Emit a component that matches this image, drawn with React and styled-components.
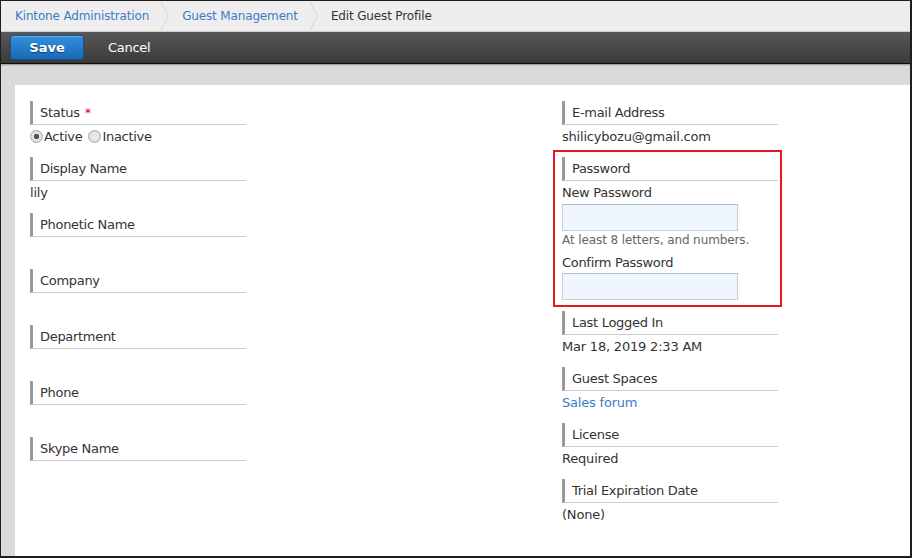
import React from 'react'
import styled, { createGlobalStyle } from 'styled-components'

const GlobalStyle = createGlobalStyle`
  body {
    margin: 0;
    font-family: "DejaVu Sans", Verdana, sans-serif;
    font-size: 13px;
    color: #333;
  }
`

const Frame = styled.div`
  width: 912px;
  height: 558px;
  box-sizing: border-box;
  border: 1px solid #1e1e1e;
  border-right-width: 2px;
  border-bottom-width: 2px;
  display: flex;
  flex-direction: column;
  overflow: hidden;
`

const Breadcrumb = styled.nav`
  height: 30px;
  background: #eeeeee;
  border-bottom: 1px solid #cfcfcf;
  display: flex;
  align-items: stretch;
  padding-left: 14px;
`

const Crumb = styled.span`
  display: flex;
  align-items: center;
  font-size: 12px;
  letter-spacing: -0.15px;
  color: ${p => (p.$current ? '#333' : '#3d7cc9')};
`

const Chevron = styled.svg`
  width: 10px;
  height: 30px;
  margin: 0 12px 0 11px;
  flex: none;
`

const Toolbar = styled.div`
  height: 31px;
  background: linear-gradient(#585858, #3a3a3a);
  border-bottom: 1px solid #0c0c0c;
  display: flex;
  align-items: center;
  padding-left: 9px;
  gap: 24px;
`

const SaveButton = styled.button`
  width: 74px;
  height: 25px;
  border: 1px solid #1b4d86;
  border-radius: 3px;
  background: linear-gradient(#3290dc, #1a69b8);
  color: #fff;
  font-family: inherit;
  font-size: 13px;
  font-weight: bold;
  text-shadow: 0 1px 1px #123d6a;
  box-shadow: inset 0 1px 0 rgba(255, 255, 255, 0.25);
  cursor: pointer;
`

const CancelButton = styled.button`
  border: none;
  background: none;
  color: #fff;
  font-family: inherit;
  font-size: 13px;
  padding: 0;
  letter-spacing: -0.3px;
  cursor: pointer;
`

const Backdrop = styled.div`
  flex: 1;
  display: flex;
  background: #d8dadc;
  box-shadow: inset 0 1px 0 #a3a3a3, inset 0 2px 0 #c4c6c8;
  padding: 21px 0 0 14px;
`

const Panel = styled.div`
  flex: 1;
  background: #fff;
  padding: 16px 0 0 15px;
  display: grid;
  grid-template-columns: 532px 216px;
  align-items: start;
`

const Column = styled.div`
  display: flex;
  flex-direction: column;
`

const Field = styled.div`
  margin-bottom: 9px;
`

const Label = styled.div`
  height: 24px;
  line-height: 23px;
  border-left: 3px solid #999;
  border-bottom: 1px solid #cccccc;
  padding-left: 7px;
  letter-spacing: -0.3px;
  width: 216px;
  box-sizing: border-box;
`

const Required = styled.span`
  color: #e0001b;
  margin-left: 5px;
`

const Value = styled.div`
  height: 23px;
  line-height: 23px;
  letter-spacing: -0.2px;
  color: ${p => (p.$link ? '#3d7cc9' : '#333')};
  display: flex;
  align-items: center;
`

const RadioOption = styled.label`
  display: flex;
  align-items: center;
  margin-right: 6px;
  letter-spacing: -0.3px;
`

const RadioDot = styled.span`
  width: 11px;
  height: 11px;
  border-radius: 50%;
  border: 1px solid #a9a9a9;
  background: radial-gradient(circle, ${p => (p.$checked ? '#555 0 2.5px, ' : '')}#e8e8e8 3px, #d0d0d0);
  margin-right: 1px;
`

const PasswordBox = styled.div`
  border: 2px solid #e8141e;
  margin: -7px -4px 4px -9px;
  padding: 5px 2px 5px 7px;
`

const SubLabel = styled.div`
  height: ${p => p.$h || 22}px;
  line-height: 23px;
  letter-spacing: -0.3px;
  margin-top: ${p => p.$gap || 0}px;
`

const TextInput = styled.input`
  display: block;
  width: 176px;
  height: 27px;
  box-sizing: border-box;
  border: 1px solid #c3ced6;
  border-top-color: #aebbc5;
  background: #eff6fd;
  margin: 0;
`

const Hint = styled.div`
  height: 18px;
  line-height: 19px;
  font-size: 12px;
  color: #666;
  letter-spacing: -0.1px;
`

const leftFields = [
  { label: 'Display Name', value: 'lily' },
  { label: 'Phonetic Name' },
  { label: 'Company' },
  { label: 'Department' },
  { label: 'Phone' },
  { label: 'Skype Name' },
]

const rightFields = [
  { label: 'Last Logged In', value: 'Mar 18, 2019 2:33 AM' },
  { label: 'Guest Spaces', value: 'Sales forum', link: true },
  { label: 'License', value: 'Required' },
  { label: 'Trial Expiration Date', value: '(None)' },
]

const Sep = () => (
  <Chevron viewBox="0 0 10 30">
    <polyline points="0.5,0 8.5,15 0.5,30" fill="none" stroke="#d6d6d6" strokeWidth="1" />
  </Chevron>
)

const App = () => {
  return (
    <Frame>
      <GlobalStyle />
      <Breadcrumb>
        <Crumb>Kintone Administration</Crumb>
        <Sep />
        <Crumb>Guest Management</Crumb>
        <Sep />
        <Crumb $current>Edit Guest Profile</Crumb>
      </Breadcrumb>
      <Toolbar>
        <SaveButton>Save</SaveButton>
        <CancelButton>Cancel</CancelButton>
      </Toolbar>
      <Backdrop>
        <Panel>
          <Column>
            <Field>
              <Label>
                Status<Required>*</Required>
              </Label>
              <Value>
                <RadioOption>
                  <RadioDot $checked />
                  Active
                </RadioOption>
                <RadioOption>
                  <RadioDot />
                  Inactive
                </RadioOption>
              </Value>
            </Field>
            {leftFields.map(f => (
              <Field key={f.label}>
                <Label>{f.label}</Label>
                <Value>{f.value}</Value>
              </Field>
            ))}
          </Column>
          <Column>
            <Field>
              <Label>E-mail Address</Label>
              <Value>shilicybozu@gmail.com</Value>
            </Field>
            <PasswordBox>
              <Label>Password</Label>
              <SubLabel $h={23}>New Password</SubLabel>
              <TextInput type="password" />
              <Hint>At least 8 letters, and numbers.</Hint>
              <SubLabel $gap={2}>Confirm Password</SubLabel>
              <TextInput type="password" />
            </PasswordBox>
            {rightFields.map(f => (
              <Field key={f.label}>
                <Label>{f.label}</Label>
                <Value $link={f.link}>{f.value}</Value>
              </Field>
            ))}
          </Column>
        </Panel>
      </Backdrop>
    </Frame>
  )
}

export default App
